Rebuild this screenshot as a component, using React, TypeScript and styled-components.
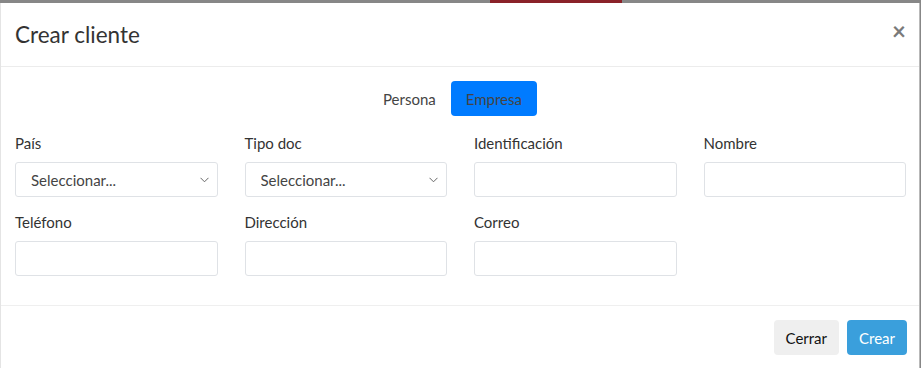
import { useState } from 'react'
import styled, { createGlobalStyle } from 'styled-components'

const GlobalStyle = createGlobalStyle`
  html, body {
    margin: 0;
    padding: 0;
    background: #878787;
    font-family: Lato, 'Open Sans', sans-serif;
    color: #333;
  }
  * {
    box-sizing: border-box;
  }
`

const Backdrop = styled.div`
  height: 3px;
  display: flex;
`
const BackdropGap = styled.div<{ w: number }>`
  width: ${({ w }) => w}px;
`
const BackdropPatch = styled.div<{ w: number }>`
  width: ${({ w }) => w}px;
  background: #8a2229;
`

const Modal = styled.div`
  width: 920px;
  background: #fff;
  border-left: 1px solid #e4e4e4;
  border-right: 1px solid #b9b9b9;
`
const Header = styled.div`
  display: flex;
  align-items: center;
  justify-content: space-between;
  height: 64px;
  padding: 0 13px 1px 14px;
  border-bottom: 1px solid #ececec;
`
const Title = styled.h5`
  margin: 0;
  font-size: 22.5px;
  font-weight: 400;
  color: #333;
  line-height: 33px;
`
const CloseButton = styled.button`
  border: 0;
  background: none;
  padding: 0;
  font-size: 24px;
  font-weight: 700;
  color: #7a7a7a;
  line-height: 1;
  font-family: Lato, sans-serif;
  cursor: pointer;
  margin-top: -6px;
`
const Body = styled.div`
  padding: 14px 13px 29px 14px;
  border-bottom: 1px solid #efefef;
`
const ToggleRow = styled.div`
  display: flex;
  justify-content: center;
  padding-right: 16px;
  margin-bottom: 15px;
`
const ToggleButton = styled.button<{ active?: boolean }>`
  height: 35px;
  padding: 0 15px;
  border: 0;
  border-radius: 4px;
  font-family: Lato, sans-serif;
  font-size: 15px;
  color: #444;
  background: ${({ active }) => (active ? '#007bff' : 'transparent')};
  cursor: pointer;
`
const Grid = styled.div`
  display: grid;
  grid-template-columns: repeat(4, 1fr);
  column-gap: 27px;
  row-gap: 13px;
`
const Field = styled.div`
  display: flex;
  flex-direction: column;
`
const Label = styled.label`
  font-size: 15px;
  line-height: 24px;
  color: #333;
  margin-bottom: 7px;
`
const Input = styled.input`
  height: 35px;
  width: 100%;
  border: 1px solid #dfe2e6;
  border-radius: 3px;
  padding: 0 15px;
  font-family: Lato, sans-serif;
  font-size: 15px;
  background: #fff;
`
const SelectBox = styled.div`
  position: relative;
  height: 35px;
`
const Select = styled.select`
  appearance: none;
  height: 35px;
  width: 100%;
  border: 1px solid #dfe2e6;
  border-radius: 3px;
  padding: 0 15px;
  font-family: Lato, sans-serif;
  font-size: 15px;
  color: #444;
  background: #fff;
`
const Chevron = styled.svg`
  position: absolute;
  right: 9px;
  top: 15px;
  pointer-events: none;
`
const Footer = styled.div`
  display: flex;
  justify-content: flex-end;
  gap: 8px;
  padding: 14px 12px 14px 14px;
`
const FooterButton = styled.button<{ primary?: boolean }>`
  height: 35px;
  padding: 0 12px;
  border: 0;
  border-radius: 4px;
  font-family: Lato, sans-serif;
  font-size: 15px;
  color: ${({ primary }) => (primary ? '#fff' : '#111')};
  background: ${({ primary }) => (primary ? '#3a9fdc' : '#efefef')};
  cursor: pointer;
`

function Dropdown() {
  return (
    <SelectBox>
      <Select defaultValue="">
        <option value="">Seleccionar...</option>
      </Select>
      <Chevron width="9" height="6" viewBox="0 0 9 6">
        <path d="M0.5 0.8 L4.5 4.8 L8.5 0.8" fill="none" stroke="#666" strokeWidth="1" />
      </Chevron>
    </SelectBox>
  )
}

export default function App() {
  const [kind, setKind] = useState<'persona' | 'empresa'>('empresa')

  return (
    <>
      <GlobalStyle />
      <Backdrop>
        <BackdropGap w={490} />
        <BackdropPatch w={132} />
      </Backdrop>
      <Modal>
        <Header>
          <Title>Crear cliente</Title>
          <CloseButton aria-label="Cerrar">×</CloseButton>
        </Header>
        <Body>
          <ToggleRow>
            <ToggleButton active={kind === 'persona'} onClick={() => setKind('persona')}>
              Persona
            </ToggleButton>
            <ToggleButton active={kind === 'empresa'} onClick={() => setKind('empresa')}>
              Empresa
            </ToggleButton>
          </ToggleRow>
          <Grid>
            <Field>
              <Label>País</Label>
              <Dropdown />
            </Field>
            <Field>
              <Label>Tipo doc</Label>
              <Dropdown />
            </Field>
            <Field>
              <Label>Identificación</Label>
              <Input />
            </Field>
            <Field>
              <Label>Nombre</Label>
              <Input />
            </Field>
            <Field>
              <Label>Teléfono</Label>
              <Input />
            </Field>
            <Field>
              <Label>Dirección</Label>
              <Input />
            </Field>
            <Field>
              <Label>Correo</Label>
              <Input />
            </Field>
          </Grid>
        </Body>
        <Footer>
          <FooterButton>Cerrar</FooterButton>
          <FooterButton primary>Crear</FooterButton>
        </Footer>
      </Modal>
    </>
  )
}
